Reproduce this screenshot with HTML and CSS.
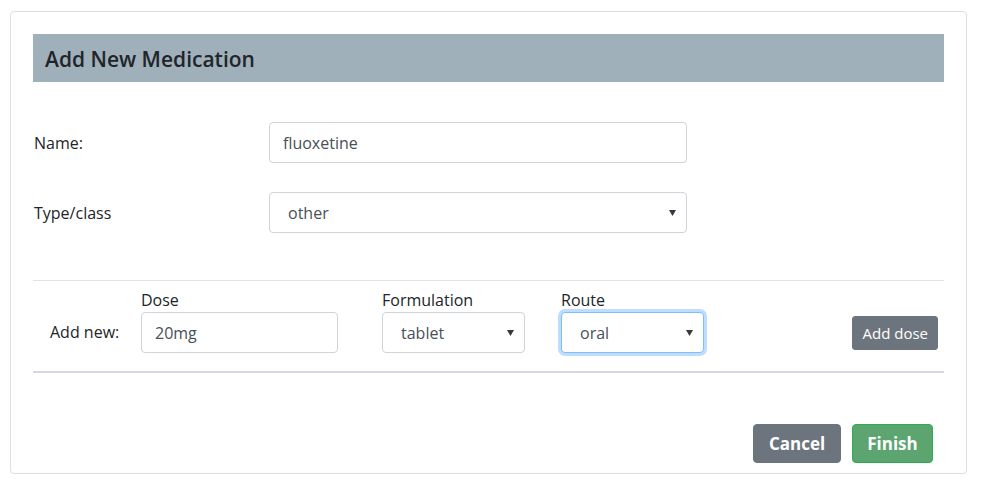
FILE: index.html
```html
<!DOCTYPE html>
<html lang="en">
<head>
<meta charset="utf-8">
<title>Add New Medication</title>
<link rel="stylesheet" href="styles.css">
</head>
<body>
<div class="card">
  <div class="card-header"><h4 class="title">Add New Medication</h4></div>

  <div class="form">
    <div class="form-row">
      <label class="form-label">Name:</label>
      <div class="control wide"><span class="control-text">fluoxetine</span></div>
    </div>
    <div class="form-row">
      <label class="form-label">Type/class</label>
      <div class="control wide select"><span class="control-text">other</span><svg class="caret" width="7" height="6" viewBox="0 0 7 6"><path d="M0 0H7L3.5 6Z"/></svg></div>
    </div>
  </div>

  <hr class="rule">

  <div class="dose-row">
    <div class="add-new">Add new:</div>
    <div class="field dose">
      <div class="field-label">Dose</div>
      <div class="control"><span class="control-text">20mg</span></div>
    </div>
    <div class="field formulation">
      <div class="field-label">Formulation</div>
      <div class="control select"><span class="control-text">tablet</span><svg class="caret" width="7" height="6" viewBox="0 0 7 6"><path d="M0 0H7L3.5 6Z"/></svg></div>
    </div>
    <div class="field route">
      <div class="field-label">Route</div>
      <div class="control select focus"><span class="control-text">oral</span><svg class="caret" width="7" height="6" viewBox="0 0 7 6"><path d="M0 0H7L3.5 6Z"/></svg></div>
    </div>
    <button class="btn btn-sm btn-secondary add-dose">Add dose</button>
  </div>

  <div class="actions">
    <button class="btn btn-lg btn-secondary">Cancel</button>
    <button class="btn btn-lg btn-success">Finish</button>
  </div>
</div>
</body>
</html>
```
FILE: styles.css
```css
* { box-sizing: border-box; }
body {
  margin: 0;
  font-family: "Open Sans", "Noto Sans", sans-serif;
  font-size: 16px;
  line-height: 24px;
  color: #212529;
  background: #fff;
}
.card {
  margin: 11px 0 0 10px;
  width: 957px;
  border: 1px solid #dfdfdf;
  border-radius: 4px;
  padding: 22px 22px 10px 22px;
}
.card-header {
  height: 48px;
  background: #9fb0bb;
  display: flex;
  align-items: center;
  padding-left: 12px;
  padding-top: 2px;
}
.title {
  margin: 0;
  font-size: 21px;
  font-weight: 600;
  color: #212529;
}
.form {
  margin-top: 40px;
  display: flex;
  flex-direction: column;
  gap: 29px;
}
.form-row {
  display: flex;
  align-items: center;
}
.form-label {
  width: 236px;
  padding-left: 1px;
}
.control {
  height: 41px;
  border: 1px solid #ced4da;
  border-radius: 4px;
  background: #fff;
  color: #495057;
  display: flex;
  align-items: center;
  padding: 0 13px;
}
.control.wide { width: 418px; }
.control.select {
  justify-content: space-between;
  padding-left: 18px;
  padding-right: 10px;
}
.control.focus {
  border-color: #80bdff;
  box-shadow: 0 0 0 3px rgba(0, 123, 255, 0.25);
}
.caret { fill: #343a40; }
.rule {
  margin: 47px 0 0 0;
  border: 0;
  border-top: 1px solid #e3e3e3;
  height: 0;
}
.dose-row {
  display: flex;
  align-items: flex-end;
  padding: 7px 6px 18px 17px;
  border-bottom: 2px solid #d3d9de;
}
.add-new {
  width: 91px;
  margin-bottom: 9px;
}
.field {
  display: flex;
  flex-direction: column;
}
.field-label { height: 24px; }
.dose { width: 197px; }
.dose .control { padding-left: 13px; }
.formulation { width: 143px; margin-left: 44px; }
.route { width: 143px; margin-left: 36px; }
.btn {
  font-family: inherit;
  color: #fff;
  border: 1px solid transparent;
  cursor: pointer;
}
.btn-secondary { background: #6c757d; border-color: #6c757d; }
.btn-success { background: #5ca470; border-color: #2bad4b; }
.btn-sm {
  height: 34px;
  font-size: 15px;
  padding: 0 9px;
  border-radius: 3px;
}
.add-dose { margin-left: auto; margin-bottom: 3px; }
.actions {
  margin-top: 51px;
  display: flex;
  justify-content: flex-end;
  gap: 11px;
  padding-right: 11px;
}
.btn-lg {
  height: 39px;
  font-size: 17px;
  font-weight: 700;
  border-radius: 4px;
}
.actions .btn-secondary { width: 88px; }
.actions .btn-success { width: 81px; }
```
